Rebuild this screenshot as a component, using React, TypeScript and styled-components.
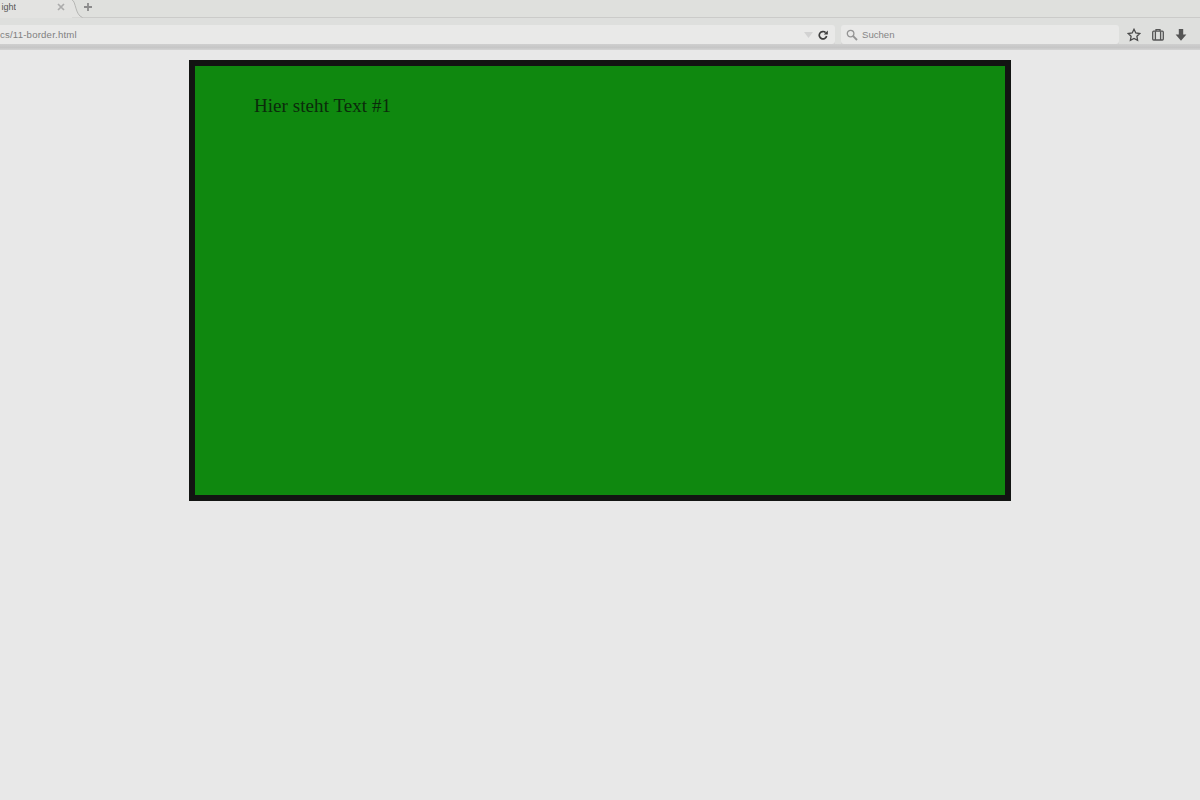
import React from "react";
import styled, { createGlobalStyle } from "styled-components";

const Global = createGlobalStyle`
  html, body { margin: 0; padding: 0; width: 100%; height: 100%; background: #e8e8e8; overflow: hidden; }
  #root { height: 100%; }
`;
const Page = styled.div`
  width: 1200px; height: 800px; display: flex; flex-direction: column; background: #e8e8e8;
  font-family: "Liberation Sans", Arial, sans-serif; overflow: hidden;
`;
const TabStrip = styled.div`
  height: 18px; flex: none; box-sizing: border-box; display: flex; align-items: flex-start; background: #dfe0dd; border-bottom: 1px solid #cbcbc9;
`;
const ActiveTab = styled.div`
  width: 72px; flex: none; height: 18px; display: flex; align-items: center; justify-content: space-between;
  background: #e3e3e1; font-size: 9px; color: #555; padding-right: 7px; box-sizing: border-box; overflow: hidden;
`;
const TabTitle = styled.span`
  display: block; width: 16px; overflow: hidden; direction: rtl; white-space: nowrap; line-height: 15px; margin-bottom: 3px;
`;
const TabIcon = styled.svg`
  flex: none; display: block; margin-bottom: 4px;
`;
const TabCurve = styled.svg`
  flex: none; display: block; width: 11px; height: 18px;
`;
const NewTab = styled.svg`
  flex: none; display: block; margin: 2px 0 0 0;
`;
const Toolbar = styled.div`
  height: 26px; flex: none; display: flex; align-items: flex-start; padding-top: 7px; box-sizing: border-box;
  background: #dedfdd; gap: 6px;
`;
const Field = styled.div<{ $w: number }>`
  width: ${(p) => p.$w}px; height: 19px; flex: none; display: flex; align-items: center; box-sizing: border-box;
  background: #e9e9e8; box-shadow: 0 1px 0 #cfcfcf; font-size: 9.6px;
`;
const Address = styled(Field)`
  justify-content: space-between; padding-right: 7px; border-radius: 0 3px 3px 0;
`;
const AddressText = styled.span`
  color: #808080; letter-spacing: 0.2px; white-space: nowrap;
`;
const AddressTools = styled.div`
  display: flex; align-items: center; gap: 5px;
`;
const Search = styled(Field)`
  padding-left: 5px; gap: 4px; color: #858585; border-radius: 3px;
`;
const Actions = styled.div`
  display: flex; align-items: center; height: 19px; margin-left: 2px; gap: 9.5px;
`;
const ActionIcon = styled.svg`
  display: block; flex: none;
`;
const Divider = styled.div`
  height: 6px; flex: none; background: linear-gradient(#cfcfcf, #c6c6c6 60%, #d4d4d4);
`;
const Content = styled.main`
  flex: 1; padding-top: 10px; background: #e8e8e8;
`;
const GreenBox = styled.section`
  width: 822px; height: 441px; margin: 0 auto; box-sizing: border-box; background: #0f880f;
  border: 6px solid #121412; padding: 28px 59px; color: #0b2b0b;
  font-family: "Liberation Serif", "Times New Roman", serif; font-size: 19px; letter-spacing: 0.06px; line-height: 24px;
`;

export default function App() {
  return (
    <Page>
      <Global />
      <TabStrip>
        <ActiveTab>
          <TabTitle>ight</TabTitle>
          <TabIcon width="8" height="8" viewBox="0 0 8 8" fill="none" stroke="#acacac" strokeWidth="1.7">
            <path d="M1 1l6 6M7 1L1 7" />
          </TabIcon>
        </ActiveTab>
        <TabCurve viewBox="0 0 11 18" fill="none">
          <path d="M0 0C4 1 3 15 10.5 17.5H0Z" fill="#e3e3e1" />
          <path d="M0 0C4 1 3 15 10.5 17.5" stroke="#b6b6b4" />
        </TabCurve>
        <NewTab width="10" height="10" viewBox="0 0 10 10" fill="none" stroke="#8c8c8c" strokeWidth="1.8">
          <path d="M5 1v8M1 5h8" />
        </NewTab>
      </TabStrip>
      <Toolbar>
        <Address $w={835}>
          <AddressText>cs/11-border.html</AddressText>
          <AddressTools>
            <ActionIcon width="9" height="6" viewBox="0 0 9 6"><path d="M0 0h9L4.5 6Z" fill="#d2d2d2" /></ActionIcon>
            <ActionIcon width="10" height="10" viewBox="0 0 10 10" fill="none" stroke="#3e3e3e" strokeWidth="1.7">
              <path d="M7.6 2.6A3.7 3.7 0 1 0 8.6 6" />
              <path d="M9.8 0.6v4H5.8z" fill="#3e3e3e" stroke="none" />
            </ActionIcon>
          </AddressTools>
        </Address>
        <Search $w={278}>
          <ActionIcon width="12" height="12" viewBox="0 0 12 12" fill="none" stroke="#949494" strokeWidth="1.3">
            <circle cx="4.6" cy="4.6" r="3.3" />
            <path d="M7.2 7.2l3.8 3.8" strokeWidth="1.9" />
          </ActionIcon>
          <span>Suchen</span>
        </Search>
        <Actions>
          <ActionIcon width="14" height="14" viewBox="0 0 14 14" fill="none" stroke="#4a4a4a" strokeWidth="1.3">
            <path d="M7 1.3l1.8 3.7 4 .55-2.9 2.8.7 4L7 10.5l-3.6 1.85.7-4L1.2 5.55l4-.55Z" />
          </ActionIcon>
          <ActionIcon width="14" height="14" viewBox="0 0 14 14" fill="none" stroke="#555" strokeWidth="1.3">
            <rect x="1.7" y="3.2" width="10.6" height="8.8" rx="1" />
            <path d="M5 3V1.7h4V3M4.4 3.2v8.8M9.6 3.2v8.8" />
          </ActionIcon>
          <ActionIcon width="14" height="14" viewBox="0 0 14 14">
            <path d="M4.8 1h4.4v5.5h3.2L7 12.8 1.6 6.5h3.2Z" fill="#555" />
          </ActionIcon>
        </Actions>
      </Toolbar>
      <Divider />
      <Content>
        <GreenBox>Hier steht Text #1</GreenBox>
      </Content>
    </Page>
  );
}
